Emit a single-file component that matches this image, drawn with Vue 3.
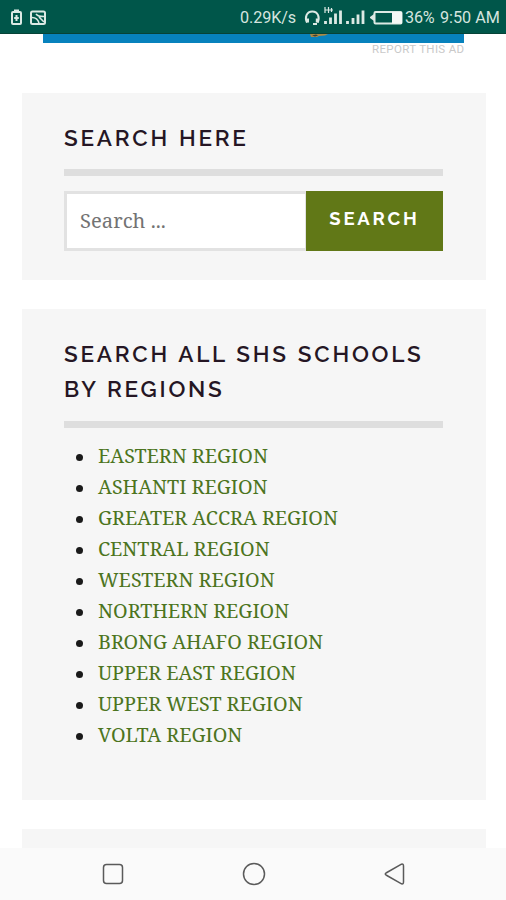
<script setup>
import { ref } from "vue";

const query = ref("");

const regions = [
  "EASTERN REGION",
  "ASHANTI REGION",
  "GREATER ACCRA REGION",
  "CENTRAL REGION",
  "WESTERN REGION",
  "NORTHERN REGION",
  "BRONG AHAFO REGION",
  "UPPER EAST REGION",
  "UPPER WEST REGION",
  "VOLTA REGION",
];
</script>

<template>
  <div class="screen">
    <header class="status">
      <svg class="status__left" width="60" height="34" viewBox="0 0 60 34">
        <g fill="none" stroke="#dce9e4" stroke-width="2">
          <rect x="12" y="12" width="9" height="12" rx="1" />
          <path d="M14 10.5h5M16.5 15v6M14.2 18h4.6" />
          <rect x="31" y="11.5" width="14" height="12.5" rx="1.5" />
          <path d="M32 17.500c4 0 6 2 7 5.500M36 14c2 2.500 4 2.500 8 2.500M39 17l5 5" stroke-width="1.600" />
        </g>
      </svg>
      <span class="status__speed">0.29K/s</span>
      <svg class="status__icons" width="104" height="34" viewBox="300 0 104 34">
        <g fill="none" stroke="#dce9e4" stroke-width="2">
          <path d="M307 22.500c-2.500-5-.5-11 5.300-11s7.800 6 5.300 11M313 24h4" />
          <path d="M307.500 18.500v4M317.300 18.500v4" stroke-width="3" />
          <path d="M325.500 21v3M330.500 17.500v6.500M335.500 13.500v10.500M340.500 10.500v13.500" stroke-width="2.800" />
          <path d="M347.500 21v3M353 18v6M358 14.500v9.500M363 10.500v13.500" stroke-width="2.800" />
          <path d="M325 7v6M328.500 7v6M325 10h8M331.500 8v4" stroke-width="1.200" />
          <rect x="374.500" y="12" width="27" height="11.500" rx="1" />
        </g>
        <path d="M370 17l4-3v7l-4-3z" fill="#dce9e4" />
        <path d="M392 12h10v11.500h-10z" fill="#f4f8f6" />
      </svg>
      <span class="status__charge">36%</span>
      <span class="status__time">9:50 AM</span>
    </header>

    <main class="page">
      <div class="ad">
        <svg width="22" height="5" viewBox="0 0 22 5">
          <path d="M1 0h18l-3 1.500-6 .5L8 3H2z" fill="#a98a45" />
          <path d="M3 1.500l4-1 2 1-3 1z" fill="#3c4035" />
        </svg>
      </div>
      <div class="ad-report">REPORT THIS AD</div>

      <section class="widget widget--search">
        <h2 class="widget__title">SEARCH HERE</h2>
        <form class="search" @submit.prevent>
          <input v-model="query" class="search__field" type="text" placeholder="Search ..." />
          <button class="search__submit" type="submit">SEARCH</button>
        </form>
      </section>

      <section class="widget widget--regions">
        <h2 class="widget__title">SEARCH ALL SHS SCHOOLS<br />BY REGIONS</h2>
        <ul class="regions">
          <li v-for="region in regions" :key="region">
            <a href="#">{{ region }}</a>
          </li>
        </ul>
      </section>

      <section class="widget"></section>
    </main>

    <nav class="nav">
      <svg width="24" height="24" viewBox="0 0 24 24">
        <rect x="2.500" y="2.500" width="19" height="19" rx="3" />
      </svg>
      <svg width="24" height="24" viewBox="0 0 24 24">
        <circle cx="12" cy="12" r="10.500" />
      </svg>
      <svg width="24" height="24" viewBox="0 0 24 24">
        <path d="M18.500 2.200L3 11Q1.500 12 3 13L18.500 21.800Q20.500 22.300 20.500 20V4Q20.500 1.700 18.500 2.200z" />
      </svg>
    </nav>
  </div>
</template>

<style>
body {
  margin: 0;
  background: #fff;
}
</style>

<style scoped>
.screen {
  display: flex;
  flex-direction: column;
  width: 506px;
  height: 900px;
  overflow: hidden;
  background: #fff;
}

.status {
  display: flex;
  flex: none;
  align-items: center;
  box-sizing: border-box;
  height: 34px;
  color: #d5e4df;
  background: #00564a;
  border-bottom: 1px solid #064337;
  font: 16.2px/34px Roboto, sans-serif;
  white-space: nowrap;
}

.status span {
  padding-top: 2px;
}

.status__left {
  margin-right: 180px;
}

.status__speed {
  width: 60px;
  letter-spacing: -0.1px;
}

.status__charge {
  width: 35px;
  margin-left: 1px;
  letter-spacing: -0.2px;
}

.status svg {
  flex: none;
}

.page {
  flex: 1;
  min-height: 0;
  overflow: hidden;
}

.ad {
  box-sizing: border-box;
  width: 421px;
  height: 9px;
  margin-left: 43px;
  padding-left: 266px;
  background: #0782bd;
}

.ad svg {
  display: block;
}

.ad-report {
  height: 13px;
  margin-right: 41.5px;
  color: #c9c9c9;
  font: 11.5px/13px Roboto, sans-serif;
  letter-spacing: 0.35px;
  text-align: right;
}

.widget {
  box-sizing: border-box;
  width: 464px;
  height: 187px;
  margin: 0 0 29px 22px;
  padding: 28px 43px 0 42px;
  background: #f6f6f6;
}

.widget--search {
  margin-top: 37px;
}

.widget--regions {
  height: 491px;
}

.widget__title {
  margin: 0;
  padding-bottom: 13px;
  color: #251624;
  border-bottom: 7px solid #dedede;
  font: 600 22.5px/35px Raleway, Lato, sans-serif;
  letter-spacing: 2.75px;
  word-spacing: 0.7px;
  white-space: nowrap;
}

.widget--regions .widget__title {
  padding-bottom: 14px;
}

.search {
  display: flex;
  height: 60px;
  margin-top: 15px;
}

.search__field {
  box-sizing: border-box;
  width: 242px;
  padding: 0 13px 3px;
  color: #333;
  background: #fff;
  border: 3px solid #e2e2e2;
  border-right-width: 1px;
  border-radius: 0;
  font: 20.2px "Noto Serif", "DejaVu Serif", serif;
}

.search__field::placeholder {
  color: #737373;
}

.search__submit {
  flex: 1;
  padding: 0 0 6px;
  color: #fff;
  background: #617817;
  border: 0;
  font: 700 18.5px Raleway, Lato, sans-serif;
  letter-spacing: 2.8px;
}

.regions {
  margin: 12px 0 0;
  padding: 0;
  list-style: none;
}

.regions li {
  display: flex;
  align-items: center;
  height: 31px;
  font: 19.7px/31px "Noto Serif", "DejaVu Serif", serif;
}

.regions li::before {
  width: 7px;
  height: 7px;
  margin: 3px 15px 0 12px;
  background: #1a1a1a;
  border-radius: 50%;
  content: "";
}

.regions a {
  color: #4c7420;
  text-decoration: none;
}

.nav {
  display: flex;
  flex: none;
  align-items: center;
  justify-content: center;
  gap: 117px;
  box-sizing: border-box;
  height: 52px;
  padding-left: 1px;
  background: #fafafa;
}

.nav svg {
  fill: none;
  stroke: #5a5a5a;
  stroke-width: 1.5;
}
</style>
